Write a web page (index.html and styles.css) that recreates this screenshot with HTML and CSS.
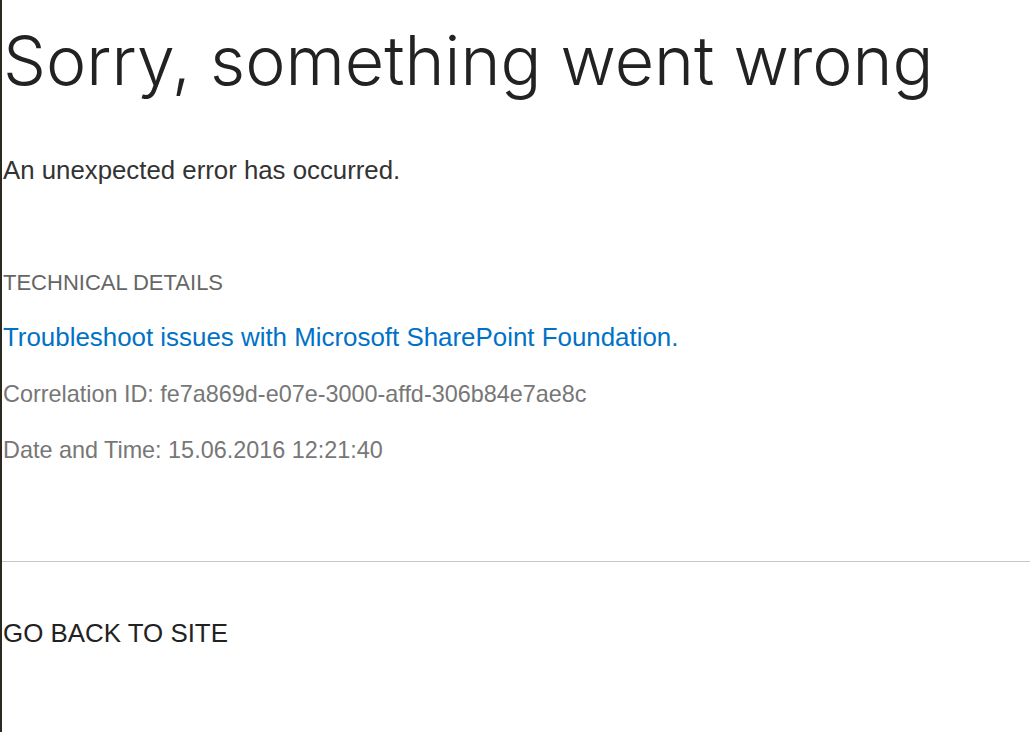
FILE: index.html
```html
<!DOCTYPE html>
<html>
<head>
    <link rel="stylesheet" href="styles.css">
</head>
<body>

<div class="page">
    <h1 class="title">Sorry, something went wrong</h1>
    <p class="message">An unexpected error has occurred.</p>

    <div class="details">
        <h2 class="details-title">TECHNICAL DETAILS</h2>
        <a class="help-link" href="#">Troubleshoot issues with Microsoft SharePoint Foundation.</a>
        <p class="meta">Correlation ID: fe7a869d-e07e-3000-affd-306b84e7ae8c</p>
        <p class="meta">Date and Time: 15.06.2016 12:21:40</p>
    </div>

    <hr class="divider">

    <a class="back-link" href="#">GO BACK TO SITE</a>
</div>

</body>
</html>
```

FILE: styles.css
```css
html, body {
    height: 100%;
}

body {
    margin: 0;
    background: #fff;
    font-family: "Liberation Sans", Arial, sans-serif;
    color: #333;
}

.page {
    min-height: 100%;
    border-left: 2px solid #2b2a22;
    padding-left: 1px;
    box-sizing: border-box;
    overflow: hidden;
}

.title {
    margin: 0;
    padding-top: 20px;
    font-family: Inter, "Liberation Sans", sans-serif;
    font-size: 68px;
    font-weight: 300;
    line-height: 80px;
    color: #222;
}

.message {
    margin: 55px 0 0;
    font-size: 25.8px;
    line-height: 30px;
    color: #333;
}

.details {
    margin-top: 85px;
}

.details-title {
    margin: 0;
    font-size: 22px;
    font-weight: normal;
    line-height: 26px;
    color: #666;
}

.help-link {
    display: block;
    margin-top: 26px;
    font-size: 25.9px;
    line-height: 30px;
    color: #0072c6;
    text-decoration: none;
}

.meta {
    margin: 28px 0 0;
    font-size: 23.4px;
    line-height: 28px;
    color: #777;
}

.divider {
    margin: 97px 0 0 -1px;
    border: none;
    border-top: 1px solid #c8c8c8;
    width: 1028px;
}

.back-link {
    display: block;
    margin-top: 56px;
    font-size: 25.9px;
    line-height: 30px;
    color: #222;
    text-decoration: none;
}
```
